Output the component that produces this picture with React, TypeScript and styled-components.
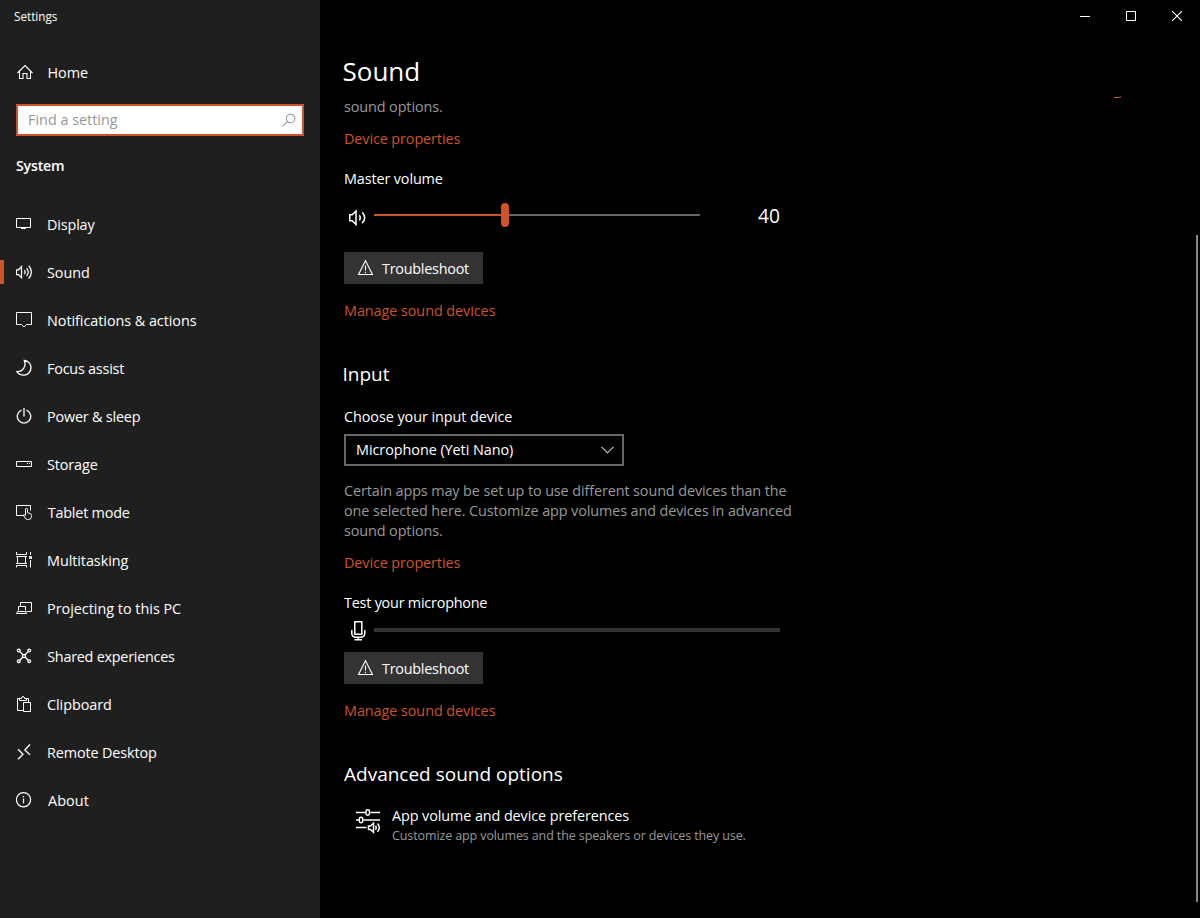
import React from "react";
import styled, { createGlobalStyle } from "styled-components";

const ACCENT = "#cd5329";

const GlobalStyle = createGlobalStyle`
  * { box-sizing: border-box; }
  body {
    margin: 0;
    background: #000;
    color: #fff;
    font-family: "Open Sans", "Noto Sans", sans-serif;
    font-size: 14.4px;
    line-height: 20px;
  }
`;

const Window = styled.div`
  display: grid;
  grid-template-columns: 320px 1fr;
  height: 918px;
  overflow: hidden;
`;

const Sidebar = styled.aside`
  background: #1f1f1f;
  display: flex;
  flex-direction: column;
`;

const AppTitle = styled.div`
  height: 32px;
  padding: 0 14px;
  font-size: 11.7px;
  line-height: 33px;
`;

const NavRow = styled.a<{ $active?: boolean; $indent?: number }>`
  position: relative;
  display: flex;
  align-items: center;
  height: 48px;
  padding-left: 16px;
  gap: ${(p) => p.$indent ?? 13}px;
  color: #fff;
  ${(p) =>
    p.$active &&
    `&::before {
      content: "";
      position: absolute;
      left: 0;
      top: 12px;
      width: 4px;
      height: 24px;
      background: ${ACCENT};
    }`}
`;

const HomeRow = styled(NavRow)`
  margin-top: 16px;
`;

const Label = styled.span<{ $track?: number }>`
  letter-spacing: ${(p) => p.$track ?? 0}px;
  white-space: nowrap;
`;

const IconLabel = styled(Label)`
  padding-top: 2px;
`;

const SearchBox = styled.div`
  display: flex;
  align-items: center;
  justify-content: space-between;
  height: 32px;
  margin: 8px 16px 0;
  padding: 0 5px 0 10px;
  border: 2px solid ${ACCENT};
  background: #fff;
  color: #979797;
`;

const SectionName = styled.div`
  margin: 20px 16px 24px;
  font-size: 14.2px;
  font-weight: 600;
  letter-spacing: -0.2px;
`;

const Nav = styled.nav`
  display: flex;
  flex-direction: column;
`;

const Glyph = styled.svg<{ $color?: string }>`
  flex: none;
  display: block;
  fill: none;
  stroke: ${(p) => p.$color ?? "currentColor"};
`;

const Main = styled.main`
  display: grid;
  grid-template-columns: 1fr 4px;
  grid-template-rows: 32px 1fr;
`;

const CaptionButtons = styled.div`
  grid-column: 1 / -1;
  display: flex;
  justify-content: flex-end;
`;

const CaptionButton = styled.button`
  width: 46px;
  height: 32px;
  padding: 0;
  border: 0;
  background: none;
  color: #fff;
  display: flex;
  align-items: center;
  justify-content: center;
`;

const Page = styled.div`
  position: relative;
  padding: 19px 0 0 24px;
`;

const PageTitle = styled.h1`
  margin: 0 0 5px -1.5px;
  font-size: 26px;
  font-weight: 400;
  line-height: 40px;
`;

const Heading = styled.h2<{ $shift?: number }>`
  margin: 40px 0 0 ${(p) => p.$shift ?? 0}px;
  font-size: 19px;
  font-weight: 400;
  line-height: 28px;
`;

const Line = styled.div<{ $top?: number; $track?: number; $shift?: number }>`
  margin: ${(p) => p.$top ?? 0}px 0 -1px ${(p) => p.$shift ?? 0}px;
  padding-top: 1px;
  letter-spacing: ${(p) => p.$track ?? 0}px;
  white-space: nowrap;
`;

const Muted = styled(Line)`
  color: #999;
`;

const Link = styled(Line)`
  color: ${ACCENT};
`;

const VolumeRow = styled.div`
  display: flex;
  align-items: center;
  height: 56px;
  margin: 0 0 8px 4px;
`;

const SpeakerSlot = styled.div`
  padding-top: 2px;
`;

const Slider = styled.div`
  display: flex;
  align-items: center;
  width: 326px;
  margin: 0 0 2px 6px;
`;

const SliderFill = styled.div`
  width: 127px;
  height: 2px;
  background: ${ACCENT};
`;

const SliderThumb = styled.div`
  width: 8px;
  height: 24px;
  border-radius: 4px;
  background: ${ACCENT};
`;

const SliderRest = styled.div`
  flex: 1;
  height: 2px;
  background: #666;
`;

const VolumeValue = styled.div`
  margin-left: 58px;
  font-size: 19.2px;
`;

const Button = styled.button`
  display: flex;
  align-items: center;
  gap: 8px;
  width: 139px;
  height: 32px;
  padding: 0 0 0 13px;
  border: 0;
  background: #333;
  color: #fff;
  font: inherit;
`;

const Select = styled.div`
  display: flex;
  align-items: center;
  justify-content: space-between;
  width: 280px;
  height: 32px;
  margin-top: 8px;
  padding: 0 8px 0 10px;
  border: 2px solid #666;
`;

const MicRow = styled.div`
  display: flex;
  align-items: center;
  height: 40px;
  margin: 0 0 0 4px;
`;

const MicSlot = styled.div`
  padding-bottom: 3px;
`;

const Meter = styled.div`
  width: 406px;
  height: 4px;
  margin: 0 0 4px 6px;
  background: #333;
`;

const Preference = styled.div`
  display: flex;
  gap: 10px;
  margin: 17px 0 0 11px;
`;

const PreferenceIcon = styled.div`
  padding-top: 3px;
`;

const Caption = styled.div`
  margin-top: 2px;
  font-size: 12.5px;
  line-height: 18px;
  letter-spacing: -0.11px;
  color: #999;
`;

const Scrollbar = styled.div`
  width: 2px;
  height: 667px;
  margin-top: 203px;
  background: #868686;
`;

const ClippedLink = styled.div`
  position: absolute;
  left: 793px;
  top: 64px;
  display: flex;
`;

const icons: Record<string, React.ReactNode> = {
  home: <path d="M1.5 10 9 2.6l7.500 7.400M3.500 8.500v7h3.500v-5h4v5h3.500v-7" />,
  display: <path d="M.5 3.500h14v9H.5zM7.500 12.500v1M5 13.500h5" />,
  sound: (
    <path d="M.5 6.800h2L5.500 3.600v11L2.500 11.500h-2zM8.300 7.200q1.700 2 0 4M10.600 5.200q3.200 4 0 8M12.800 2.700q5 6.400 0 13" />
  ),
  notifications: <path d="M.5 1.500h15v12h-5L8 16l-2.500-2.500h-5z" />,
  focus: (
    <path d="M8.300 1.500C12.500 2 15 5.200 15 8.800c0 4.200-3.200 7.400-7.200 7.400-3 0-5.500-1.300-6.800-3.500C7 12.700 10.600 7 8.300 1.500z" />
  ),
  power: <path d="M5.500 3.200a6.700 6.700 0 1 0 5 0M8 1v8.500" />,
  storage: (
    <>
      <path d="M.5 6.500h15v5H.5z" />
      <path d="M11 8.500h1M13 8.500h1" />
    </>
  ),
  tablet: (
    <path d="M7 12.500H.5v-10h14v5M9.500 12.500V6.300a1 1 0 0 1 2 0v3.500l2.500.7q1.500.5 1.500 2v1q0 3-3 3h-1q-1.500 0-2.500-1.600L7.300 12q1-.8 2.200.5" />
  ),
  multitasking: (
    <>
      <path d="M.5 1v2.500h10V1M1.500 5.500h8v7h-8zM.5 16.500v-2h10v2M14.500 1v3M14.500 9v7.500M0 5.500h11M0 12.500h11" />
      <path d="M13 6.500h3" strokeWidth="2.500" />
    </>
  ),
  projecting: (
    <path d="M4.500 7.500v-4h11v9h-5M2.500 11.500v-4h7v4M1.500 12.500h8.200l.8 2H.5z" />
  ),
  shared: (
    <>
      <circle cx="2.800" cy="3.500" r="1.400" />
      <circle cx="13.200" cy="3.500" r="1.400" />
      <circle cx="2.800" cy="14.300" r="1.400" />
      <circle cx="13.200" cy="14.300" r="1.400" />
      <circle cx="8" cy="9" r="1.500" />
      <path d="m3.900 4.600 3 3.200M12.100 4.600l-3 3.200M3.900 13.200l3-3.200M12.100 13.200l-3-3.200" />
    </>
  ),
  clipboard: (
    <path d="M7 15.500H1.500v-12H4M10 3.500h2.500V7M3.500 5.500v-2h2q0-2 1.500-2t1.500 2h2v2zM7.500 7.500h7v9h-7z" />
  ),
  remote: <path d="m2 6.300 5 4.900-5 5M14 1.500 8.800 7l5.200 4.700" />,
  about: (
    <>
      <circle cx="7.500" cy="8.700" r="7.100" />
      <path d="M7.500 7.500v5M7.500 5v1.200" />
    </>
  ),
};

interface Item {
  icon: string;
  label: string;
  track: number;
  gap?: number;
  weight?: number;
  active?: boolean;
}

const items: Item[] = [
  { icon: "display", label: "Display", track: -0.15 },
  { icon: "sound", label: "Sound", track: -0.05, weight: 1.25, active: true },
  { icon: "notifications", label: "Notifications & actions", track: -0.05 },
  { icon: "focus", label: "Focus assist", track: -0.22, weight: 1.3 },
  { icon: "power", label: "Power & sleep", track: -0.19, weight: 1.3 },
  { icon: "storage", label: "Storage", track: -0.12 },
  { icon: "tablet", label: "Tablet mode", track: -0.2, gap: 13.7 },
  { icon: "multitasking", label: "Multitasking", track: -0.06 },
  { icon: "projecting", label: "Projecting to this PC", track: -0.01 },
  { icon: "shared", label: "Shared experiences", track: -0.25, gap: 13.2, weight: 1.3 },
  { icon: "clipboard", label: "Clipboard", track: -0.06 },
  { icon: "remote", label: "Remote Desktop", track: -0.12, weight: 1.3 },
  { icon: "about", label: "About", track: 0.1, gap: 14, weight: 1.2 },
];

function NavIcon({ name, weight = 1 }: { name: string; weight?: number }) {
  return (
    <Glyph width="18" height="18" viewBox="0 0 18 18" strokeWidth={weight}>
      {icons[name]}
    </Glyph>
  );
}

function TroubleshootButton() {
  return (
    <Button>
      <Glyph width="17" height="18" viewBox="0 0 17 18">
        <path d="M8.500 1.800 15.500 15.500h-14zM8.500 6.500v5M8.500 12.700v1.300" strokeWidth="1.100" />
      </Glyph>
      <IconLabel $track={-0.25}>Troubleshoot</IconLabel>
    </Button>
  );
}

export default function App() {
  return (
    <>
      <GlobalStyle />
      <Window>
        <Sidebar>
          <AppTitle>Settings</AppTitle>
          <HomeRow $indent={13.5}>
            <NavIcon name="home" weight={1.1} />
            <IconLabel>Home</IconLabel>
          </HomeRow>
          <SearchBox>
            <Label>Find a setting</Label>
            <Glyph width="16" height="16" viewBox="0 0 16 16" strokeWidth="1.100">
              <circle cx="9.600" cy="6.500" r="4.300" />
              <path d="M6.500 9.700 1.500 14.300" />
            </Glyph>
          </SearchBox>
          <SectionName>System</SectionName>
          <Nav>
            {items.map((item) => (
              <NavRow key={item.icon} $active={item.active} $indent={item.gap}>
                <NavIcon name={item.icon} weight={item.weight} />
                <IconLabel $track={item.track}>{item.label}</IconLabel>
              </NavRow>
            ))}
          </Nav>
        </Sidebar>

        <Main>
          <CaptionButtons>
            <CaptionButton aria-label="Minimize">
              <Glyph width="10" height="10" viewBox="0 0 10 10">
                <path d="M0 5.500h10" />
              </Glyph>
            </CaptionButton>
            <CaptionButton aria-label="Maximize">
              <Glyph width="10" height="10" viewBox="0 0 10 10">
                <path d="M.5.5h9v9h-9z" />
              </Glyph>
            </CaptionButton>
            <CaptionButton aria-label="Close">
              <Glyph width="10" height="10" viewBox="0 0 10 10">
                <path d="m0 0 10 10M10 0 0 10" strokeWidth="1.100" />
              </Glyph>
            </CaptionButton>
          </CaptionButtons>

          <Page>
            <PageTitle>Sound</PageTitle>
            <Muted $track={-0.1}>sound options.</Muted>
            <Link $top={12} $track={-0.1}>Device properties</Link>
            <Line $top={20} $track={-0.12}>Master volume</Line>
            <VolumeRow>
              <SpeakerSlot>
                <Glyph width="20" height="18" viewBox="0 0 20 18" strokeWidth="1.500">
                  <path d="M1.800 6.800h2.400L8 3v13.500l-3.800-3.800H1.800zM11.300 7.200q1.900 2.500 0 5M14.200 4.300q5 5.500 0 11" />
                </Glyph>
              </SpeakerSlot>
              <Slider>
                <SliderFill />
                <SliderThumb />
                <SliderRest />
              </Slider>
              <VolumeValue>40</VolumeValue>
            </VolumeRow>
            <TroubleshootButton />
            <Link $top={16} $track={-0.06}>Manage sound devices</Link>

            <Heading $shift={-1.5}>Input</Heading>
            <Line $top={18} $track={-0.06}>Choose your input device</Line>
            <Select>
              <Label $track={-0.05}>Microphone (Yeti Nano)</Label>
              <Glyph width="13" height="8" viewBox="0 0 13 8" $color="#ccc">
                <path d="m.5.8 6 6 6-6" strokeWidth="1.100" />
              </Glyph>
            </Select>
            <Muted $top={14} $track={-0.1}>
              Certain apps may be set up to use different sound devices than the
              <br />
              one selected here. Customize app volumes and devices in advanced
              <br />
              sound options.
            </Muted>
            <Link $top={12} $track={-0.1}>Device properties</Link>
            <Line $top={20} $track={-0.22}>Test your microphone</Line>
            <MicRow>
              <MicSlot>
                <Glyph width="20" height="22" viewBox="0 0 20 22" strokeWidth="1.500">
                  <path d="M6.800 1.800h7v12.500h-7zM3.800 10v3.200q0 4 4.500 4h4q4.500 0 4.500-4V10M10.300 17.300v2.500M6.500 19.800h7.500" />
                </Glyph>
              </MicSlot>
              <Meter />
            </MicRow>
            <TroubleshootButton />
            <Link $top={16} $track={-0.06}>Manage sound devices</Link>

            <Heading>Advanced sound options</Heading>
            <Preference>
              <PreferenceIcon>
                <Glyph width="27" height="26" viewBox="0 0 27 26" strokeWidth="1.500">
                  <path d="M1 4.500h9.500M15.500 4.500h9.500M1 12h3M8.500 12h16.500M1 19.500h10.500" />
                  <rect x="11" y="1.700" width="3.500" height="5.600" rx="1.700" />
                  <rect x="4.300" y="9.200" width="3.500" height="5.600" rx="1.700" />
                  <path d="M13.500 18h2l3-2.800v9l-3-2.700h-2zM20.500 17.700q1.400 2 0 4M22.500 15.500q3.600 4 0 8.400" />
                </Glyph>
              </PreferenceIcon>
              <div>
                <Line $track={-0.09}>App volume and device preferences</Line>
                <Caption>Customize app volumes and the speakers or devices they use.</Caption>
              </div>
            </Preference>

            <ClippedLink>
              <Glyph width="9" height="3" viewBox="0 0 9 3" $color={ACCENT}>
                <path d="M1 1.500h5L8 .5" />
              </Glyph>
            </ClippedLink>
          </Page>
          <Scrollbar />
        </Main>
      </Window>
    </>
  );
}
